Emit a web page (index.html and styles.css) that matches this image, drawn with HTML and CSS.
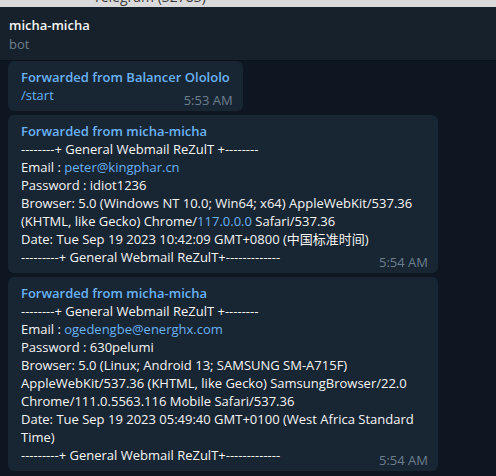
FILE: index.html
```html
<!DOCTYPE html>
<html lang="en">
<head>
  <meta charset="UTF-8">
  <title>micha-micha</title>
  <link rel="stylesheet" href="styles.css">
</head>
<body>

  <!-- window title, mostly scrolled off -->
  <div class="titlebar"><span>Telegram (32783)</span></div>

  <!-- chat header -->
  <div class="header">
    <div class="name">micha-micha</div>
    <div class="status">bot</div>
  </div>

  <div class="chat">

    <div class="bubble small">
      <div class="fwd">Forwarded from Balancer Olololo</div>
      <div><a class="link">/start</a></div>
      <span class="time">5:53 AM</span>
    </div>

    <div class="bubble">
      <div class="fwd">Forwarded from micha-micha</div>
      <div>--------+ General Webmail ReZulT +--------</div>
      <div>Email : <a class="link">peter@kingphar.cn</a></div>
      <div>Password : idiot1236</div>
      <div>Browser: 5.0 (Windows NT 10.0; Win64; x64) AppleWebKit/537.36</div>
      <div>(KHTML, like Gecko) Chrome/<a class="link">117.0.0.0</a> Safari/537.36</div>
      <div>Date: Tue Sep 19 2023 10:42:09 GMT+0800 (中国标准时间)</div>
      <div>---------+ General Webmail ReZulT+-------------</div>
      <span class="time">5:54 AM</span>
    </div>

    <div class="bubble">
      <div class="fwd">Forwarded from micha-micha</div>
      <div>--------+ General Webmail ReZulT +--------</div>
      <div>Email : <a class="link">ogedengbe@energhx.com</a></div>
      <div>Password : 630pelumi</div>
      <div>Browser: 5.0 (Linux; Android 13; SAMSUNG SM-A715F)</div>
      <div>AppleWebKit/537.36 (KHTML, like Gecko) SamsungBrowser/22.0</div>
      <div>Chrome/111.0.5563.116 Mobile Safari/537.36</div>
      <div>Date: Tue Sep 19 2023 05:49:40 GMT+0100 (West Africa Standard</div>
      <div>Time)</div>
      <div>---------+ General Webmail ReZulT+-------------</div>
      <span class="time">5:54 AM</span>
    </div>

  </div>

</body>
</html>
```

FILE: styles.css
```css
body {
  margin: 0;
  padding: 0;
  background-color: #0e1621;
  font-family: "Open Sans", "Noto Sans CJK SC", sans-serif;
  font-size: 13px;
  color: #f5f5f5;
  overflow: hidden;
}

.titlebar {
  height: 7px;
  overflow: hidden;
  background-color: #dadada;
  padding-left: 93px;
  color: #3a3a3a;
}

.titlebar span {
  display: block;
  font-size: 14px;
  line-height: 14px;
  margin-top: -10px;
}

.header {
  height: 54px;
  box-sizing: border-box;
  padding: 9px 0 0 9px;
  background-color: #17212b;
  border-bottom: 1px solid #0b121a;
}

.header .name {
  font-weight: 600;
  line-height: 18px;
}

.header .status {
  color: #6d7f8f;
  line-height: 20px;
}

.chat {
  display: flex;
  flex-direction: column;
  align-items: flex-start;
  gap: 4px;
  padding: 0 0 0 8px;
}

.bubble {
  position: relative;
  width: 430px;
  box-sizing: border-box;
  padding: 7px 13px;
  background-color: #182533;
  border-radius: 6px;
  line-height: 18px;
  white-space: nowrap;
}

.bubble.small {
  width: auto;
}

.fwd {
  color: #6ab3f3;
  font-weight: 600;
}

.link {
  color: #6ab2f2;
}

.time {
  position: absolute;
  right: 10px;
  bottom: 2px;
  color: #6d7f8f;
  line-height: 18px;
}
```
